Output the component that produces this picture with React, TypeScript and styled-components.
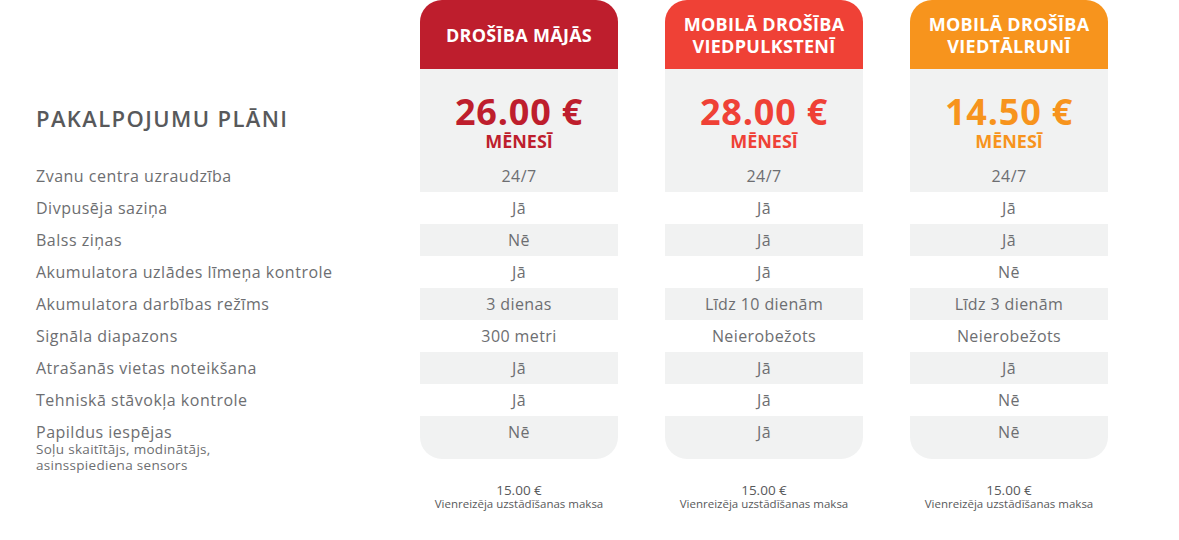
import React from 'react'
import styled, {createGlobalStyle} from 'styled-components'

const GlobalStyle = createGlobalStyle`
  body {
    margin: 0;
    background: #fff;
    font-family: 'Open Sans', 'Noto Sans', sans-serif;
    color: #6d6e71;
  }
`

type Plan = {
  title: string[]
  price: string
  color: string
  values: string[]
}

const features = [
  'Zvanu centra uzraudzība',
  'Divpusēja saziņa',
  'Balss ziņas',
  'Akumulatora uzlādes līmeņa kontrole',
  'Akumulatora darbības režīms',
  'Signāla diapazons',
  'Atrašanās vietas noteikšana',
  'Tehniskā stāvokļa kontrole',
]

const plans: Plan[] = [
  {
    title: ['DROŠĪBA MĀJĀS'],
    price: '26.00 €',
    color: '#be1e2d',
    values: ['24/7', 'Jā', 'Nē', 'Jā', '3 dienas', '300 metri', 'Jā', 'Jā', 'Nē'],
  },
  {
    title: ['MOBILĀ DROŠĪBA', 'VIEDPULKSTENĪ'],
    price: '28.00 €',
    color: '#ef4136',
    values: ['24/7', 'Jā', 'Jā', 'Jā', 'Līdz 10 dienām', 'Neierobežots', 'Jā', 'Jā', 'Jā'],
  },
  {
    title: ['MOBILĀ DROŠĪBA', 'VIEDTĀLRUNĪ'],
    price: '14.50 €',
    color: '#f7941d',
    values: ['24/7', 'Jā', 'Jā', 'Nē', 'Līdz 3 dienām', 'Neierobežots', 'Jā', 'Nē', 'Nē'],
  },
]

export default function App() {
  return (
    <>
      <GlobalStyle />
      <Table>
        <LabelColumn>
          <Heading>PAKALPOJUMU PLĀNI</Heading>
          {features.map(f => (
            <Label key={f}>{f}</Label>
          ))}
          <ExtraLabel>
            Papildus iespējas
            <Small>Soļu skaitītājs, modinātājs,</Small>
            <Small>asinsspiediena sensors</Small>
          </ExtraLabel>
        </LabelColumn>
        {plans.map(plan => (
          <PlanColumn key={plan.price}>
            <Card>
              <Header $color={plan.color}>
                <HeaderText>
                  {plan.title.map(t => (
                    <div key={t}>{t}</div>
                  ))}
                </HeaderText>
              </Header>
              <PriceBlock $color={plan.color}>
                <Price>{plan.price}</Price>
                <Period>MĒNESĪ</Period>
              </PriceBlock>
              {plan.values.map((v, i) => (
                <Cell key={i} $shaded={i % 2 === 0} $last={i === plan.values.length - 1}>
                  {v}
                </Cell>
              ))}
            </Card>
            <Fee>
              <FeeAmount>15.00 €</FeeAmount>
              <FeeNote>Vienreizēja uzstādīšanas maksa</FeeNote>
            </Fee>
          </PlanColumn>
        ))}
      </Table>
    </>
  )
}

const Table = styled.div`
  display: grid;
  grid-template-columns: 373px repeat(3, 198px);
  column-gap: 47px;
  width: 1179px;
  height: 540px;
  overflow: hidden;
`

const LabelColumn = styled.div`
  display: flex;
  flex-direction: column;
  padding-left: 36px;
`

const Heading = styled.h1`
  margin: 0;
  height: 160px;
  box-sizing: border-box;
  padding-top: 104px;
  font-size: 22px;
  line-height: 28px;
  font-weight: 600;
  color: #58595b;
  letter-spacing: 1.4px;
  white-space: nowrap;
`

const Label = styled.div`
  height: 32px;
  line-height: 32px;
  font-size: 16px;
  letter-spacing: 0.5px;
  white-space: nowrap;
`

const ExtraLabel = styled.div`
  padding-top: 7px;
  font-size: 16px;
  line-height: 18px;
  letter-spacing: 0.5px;
`

const Small = styled.div`
  font-size: 13.5px;
  line-height: 16px;
  letter-spacing: 0.3px;
`

const PlanColumn = styled.div`
  display: flex;
  flex-direction: column;
`

const Card = styled.div`
  display: flex;
  flex-direction: column;
  border-radius: 22px;
  overflow: hidden;
`

const Header = styled.div<{$color: string}>`
  height: 69px;
  display: flex;
  align-items: center;
  justify-content: center;
  background: ${p => p.$color};
  color: #fff;
`

const HeaderText = styled.div`
  text-align: center;
  font-size: 18px;
  line-height: 22px;
  font-weight: 700;
  letter-spacing: 0.3px;
`

const PriceBlock = styled.div<{$color: string}>`
  height: 91px;
  box-sizing: border-box;
  padding-top: 23px;
  background: #f1f2f2;
  color: ${p => p.$color};
  text-align: center;
  font-weight: 700;
`

const Price = styled.div`
  font-size: 36px;
  line-height: 40px;
  letter-spacing: 0.8px;
`

const Period = styled.div`
  font-size: 18px;
  line-height: 18px;
`

const Cell = styled.div<{$shaded: boolean; $last: boolean}>`
  height: ${p => (p.$last ? '43px' : '32px')};
  line-height: 32px;
  text-align: center;
  font-size: 16px;
  letter-spacing: 0.4px;
  background: ${p => (p.$shaded ? '#f1f2f2' : '#fff')};
`

const Fee = styled.div`
  margin-top: 24px;
  text-align: center;
  color: #58595b;
`

const FeeAmount = styled.div`
  font-size: 13.5px;
  line-height: 14px;
`

const FeeNote = styled.div`
  font-size: 11.5px;
  line-height: 13px;
`
